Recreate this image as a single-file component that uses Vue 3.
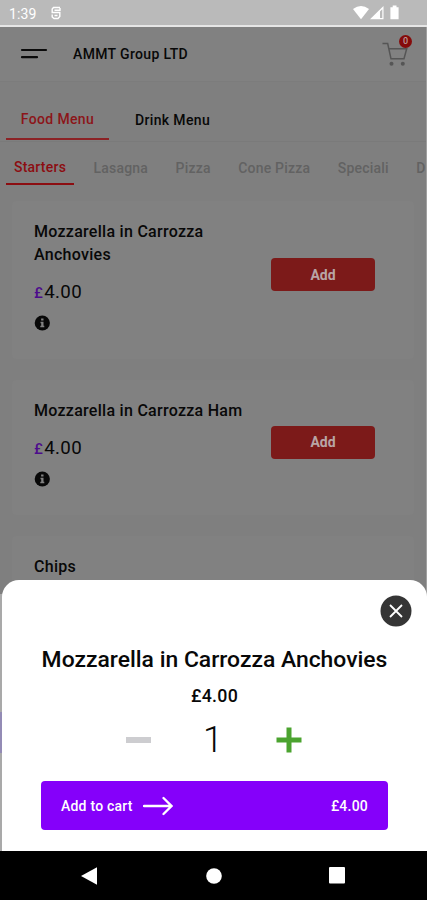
<template>
  <div class="phone">
    <div class="status-bar">
      <span class="clock">1:39</span>
      <svg class="status-app" viewBox="0 0 12 14" width="12" height="14">
        <path d="M10 1.500H3.500L2.200 3v3.500h7.600v4L8 12.500H4L2.200 11V8.500M4.500 4.200H10V2M4.500 9.500h3" />
      </svg>
      <svg class="status-icons" viewBox="0 0 48 16" width="48" height="16">
        <path d="M0 4Q8-1.8 16 4L8 14.2z" />
        <path d="M30.5 1v13.2H17z" />
        <path class="signal-gap" d="M27 6.5v6.4h2.3V4.2z" />
        <path d="M39.7.6h3.8v1.6h2.1v12h-8.2v-12h2.3z" />
      </svg>
    </div>

    <div class="screen">
      <header class="app-bar">
        <svg class="menu-icon" viewBox="0 0 28 12" width="28" height="12">
          <path d="M2 2h24M2 9.2h15" />
        </svg>
        <h1 class="brand">AMMT Group LTD</h1>
        <div class="cart">
          <svg viewBox="0 0 26 26" width="26" height="26">
            <path d="M.5 2.500h5.200l3.300 15.300H22L24.700 7.800H7.200" />
            <circle cx="9.500" cy="22.700" r="2" />
            <circle cx="20.800" cy="22.700" r="2" />
          </svg>
          <span class="cart-count">0</span>
        </div>
      </header>

      <nav class="menu-tabs">
        <span
          v-for="(tab, i) in menus"
          :key="tab"
          class="menu-tab"
          :class="{ active: i === 0 }"
        >{{ tab }}</span>
      </nav>

      <nav class="category-tabs">
        <span
          v-for="(cat, i) in categories"
          :key="cat"
          class="category-tab"
          :class="{ active: i === 0 }"
        >{{ cat }}</span>
      </nav>

      <main class="item-list">
        <article v-for="item in items" :key="item.name" class="item-card">
          <div class="item-info">
            <h2 class="item-name">{{ item.name }}</h2>
            <p class="item-price"><span class="currency">£</span>{{ item.price }}</p>
            <svg class="info-icon" viewBox="0 0 16 16" width="16" height="16">
              <circle cx="8.300" cy="8" r="7.600" />
              <path d="M7.100 3.500h2.400v2H7.100zM6.500 6.800h3v4h.8v1.400h-4v-1.400h.9V8.200h-.7z" />
            </svg>
          </div>
          <div class="item-action">
            <button class="add-btn">Add</button>
          </div>
        </article>
      </main>
    </div>

    <div class="edge"></div>
    <section class="sheet">
      <button class="close-btn">
        <svg viewBox="0 0 32 32" width="32" height="32">
          <circle cx="16" cy="16" r="15.500" />
          <path d="M10 10l12 12M22 10L10 22" />
        </svg>
      </button>
      <h2 class="sheet-title">Mozzarella in Carrozza Anchovies</h2>
      <p class="sheet-price">£4.00</p>
      <div class="quantity">
        <span class="minus"></span>
        <span class="count">{{ quantity }}</span>
        <svg class="plus" viewBox="0 0 26 26" width="26" height="26">
          <path d="M.5 13h25M13 .5v25" />
        </svg>
      </div>
      <button class="cart-btn">
        <span class="cart-label">Add to cart</span>
        <svg class="arrow" viewBox="0 0 30 20" width="30" height="20">
          <path d="M1 10h27M20.500 2l8 8-8 8" />
        </svg>
        <span class="cart-total">£4.00</span>
      </button>
    </section>

    <footer class="nav-bar">
      <svg viewBox="0 0 17 18" width="17" height="18"><path d="M0 9L16 .3v17.400z" /></svg>
      <svg viewBox="0 0 16 16" width="16" height="16"><circle cx="8" cy="8" r="7.800" /></svg>
      <svg viewBox="0 0 16 17" width="16" height="17"><rect width="16" height="16.500" rx="1" /></svg>
    </footer>
  </div>
</template>

<script setup>
import { ref } from 'vue'

const quantity = ref(1)
const menus = ['Food Menu', 'Drink Menu']
const categories = ['Starters', 'Lasagna', 'Pizza', 'Cone Pizza', 'Speciali', 'D']
const items = [
  { name: 'Mozzarella in Carrozza Anchovies', price: '4.00' },
  { name: 'Mozzarella in Carrozza Ham', price: '4.00' },
  { name: 'Chips', price: '3.00' },
]
</script>

<style>
body {
  margin: 0;
  background: #000;
}
</style>

<style scoped>
.phone {
  position: relative;
  display: flex;
  flex-direction: column;
  width: 427px;
  height: 900px;
  overflow: hidden;
  font-family: Roboto, 'Liberation Sans', sans-serif;
  color: #080808;
}
h1,
h2,
p {
  margin: 0;
}
button {
  border: none;
  padding: 0;
  font-family: inherit;
}
svg {
  display: block;
}

.status-bar {
  display: flex;
  align-items: center;
  box-sizing: border-box;
  height: 27px;
  padding: 0 27px 0 9px;
  background: #bababa;
  border-bottom: 2px solid #e6e6e6;
  color: #fff;
}
.clock {
  width: 41px;
  font-size: 14px;
  letter-spacing: 0.1px;
  padding-top: 2px;
}
.status-app {
  margin-top: 1px;
}
.status-app path {
  fill: none;
  stroke: #fff;
  stroke-width: 1.4;
}
.status-icons {
  margin-left: auto;
  margin-right: -1px;
  margin-top: 1px;
  fill: #fff;
}
.status-icons .signal-gap {
  fill: #bababa;
}

.screen {
  display: flex;
  flex-direction: column;
  height: 824px;
  overflow: hidden;
  box-sizing: border-box;
  background: #7f7f7f;
  border-right: 1px solid #a0a0a0;
}
.app-bar {
  display: flex;
  align-items: center;
  flex: none;
  box-sizing: border-box;
  height: 55px;
  padding: 0 18px 0 20px;
  background: #818181;
  border-bottom: 1px solid #7c7c7c;
}
.menu-icon path {
  fill: none;
  stroke: #0b0b0b;
  stroke-width: 2.2;
  stroke-linecap: round;
}
.brand {
  margin-left: 25px;
  font-size: 14px;
  font-weight: 500;
  letter-spacing: 0.35px;
}
.cart {
  position: relative;
  margin-left: auto;
}
.cart svg {
  fill: none;
  stroke: #555;
  stroke-width: 1.5;
}
.cart circle {
  fill: #555;
  stroke: none;
}
.cart-count {
  position: absolute;
  top: -6px;
  right: -4px;
  width: 13px;
  height: 13px;
  border-radius: 50%;
  background: #850b0b;
  color: #b99;
  font-size: 9px;
  font-weight: 500;
  line-height: 13px;
  text-align: center;
}

.menu-tabs {
  display: flex;
  flex: none;
  box-sizing: border-box;
  height: 60px;
  padding: 15px 0 0 6px;
  border-bottom: 1px solid #7a7a7a;
}
.menu-tab {
  box-sizing: border-box;
  width: 103px;
  height: 43px;
  line-height: 46px;
  margin-right: 12px;
  text-align: center;
  font-size: 14px;
  font-weight: 500;
  letter-spacing: 0.35px;
}
.menu-tab.active {
  line-height: 44px;
  color: #8c1519;
  border-bottom: 2px solid #8c2225;
}
.category-tabs {
  display: flex;
  flex: none;
  height: 44px;
  padding-left: 6px;
  white-space: nowrap;
  overflow: hidden;
}
.category-tab {
  box-sizing: border-box;
  flex: none;
  height: 43px;
  line-height: 53px;
  padding: 0 8px;
  margin-right: 11.4px;
  font-size: 14px;
  font-weight: 500;
  letter-spacing: 0.22px;
  color: #626262;
}
.category-tab:last-child {
  padding-right: 0;
  margin-right: 0;
}
.category-tab.active {
  line-height: 51px;
  color: #8c0d11;
  border-bottom: 2px solid #8c0d11;
}

.item-list {
  padding: 15px 12px 0;
}
.item-card {
  display: flex;
  box-sizing: border-box;
  padding: 19px 39px 28px 22px;
  margin-bottom: 21px;
  background: #818181;
  border-radius: 4px;
}
.item-info {
  flex: 1;
}
.item-name {
  max-width: 212px;
  font-size: 16px;
  font-weight: 500;
  line-height: 23px;
  letter-spacing: 0.28px;
}
.item-price {
  margin-top: 14px;
  font-size: 18.7px;
  line-height: 24px;
  letter-spacing: 0.35px;
}
.currency {
  margin-right: 1px;
  font-size: 15px;
  font-weight: 500;
  color: #4d0c8c;
}
.info-icon {
  margin-top: 10px;
}
.info-icon circle {
  fill: #080808;
}
.info-icon path {
  fill: #818181;
}
.item-action {
  display: flex;
  align-items: center;
}
.add-btn {
  width: 104px;
  height: 33px;
  margin-bottom: 2px;
  border-radius: 4px;
  background: #7c1a19;
  color: #b9a5a5;
  font-size: 14px;
  font-weight: 700;
}

.edge {
  position: absolute;
  left: 0;
  top: 594px;
  width: 4px;
  height: 257px;
  background: linear-gradient(#a9a9a9 118px, #938bb5 118px 159px, #a9a9a9 159px);
}
.sheet {
  position: absolute;
  left: 2px;
  top: 580px;
  display: flex;
  flex-direction: column;
  align-items: center;
  box-sizing: border-box;
  width: 425px;
  height: 271px;
  padding: 15px 15px 0;
  background: #fff;
  border-radius: 17px 17px 0 0;
}
.close-btn {
  align-self: flex-end;
  background: none;
}
.close-btn circle {
  fill: #353535;
}
.close-btn path {
  stroke: #fff;
  stroke-width: 1.8;
}
.sheet-title {
  margin-top: 18px;
  font-size: 22.9px;
  font-weight: 500;
  line-height: 30px;
  white-space: nowrap;
}
.sheet-price {
  margin-top: 9px;
  font-size: 17.8px;
  font-weight: 500;
  line-height: 24px;
  letter-spacing: 0.3px;
}
.quantity {
  display: flex;
  align-items: center;
  justify-content: space-between;
  width: 176px;
  height: 40px;
  margin-top: 12px;
  margin-right: 2px;
}
.minus {
  width: 25px;
  height: 6px;
  background: #cdcdd0;
}
.count {
  font-size: 36px;
  font-weight: 300;
  line-height: 40px;
}
.plus path {
  stroke: #4ba32f;
  stroke-width: 5;
}
.cart-btn {
  display: flex;
  align-items: center;
  flex: none;
  width: 347px;
  height: 49px;
  margin-top: 21px;
  padding: 0 20px;
  border-radius: 4px;
  background: #8500fa;
  color: #fff;
  font-size: 14px;
  font-weight: 500;
  letter-spacing: 0.22px;
}
.arrow {
  margin-left: 10px;
}
.arrow path {
  fill: none;
  stroke: #fff;
  stroke-width: 2.3;
  stroke-linecap: round;
}
.cart-total {
  margin-left: auto;
}

.nav-bar {
  display: flex;
  align-items: center;
  justify-content: space-between;
  box-sizing: border-box;
  height: 49px;
  padding: 0 82px 0 81px;
  background: #000;
}
.nav-bar svg {
  fill: #fff;
}
</style>
